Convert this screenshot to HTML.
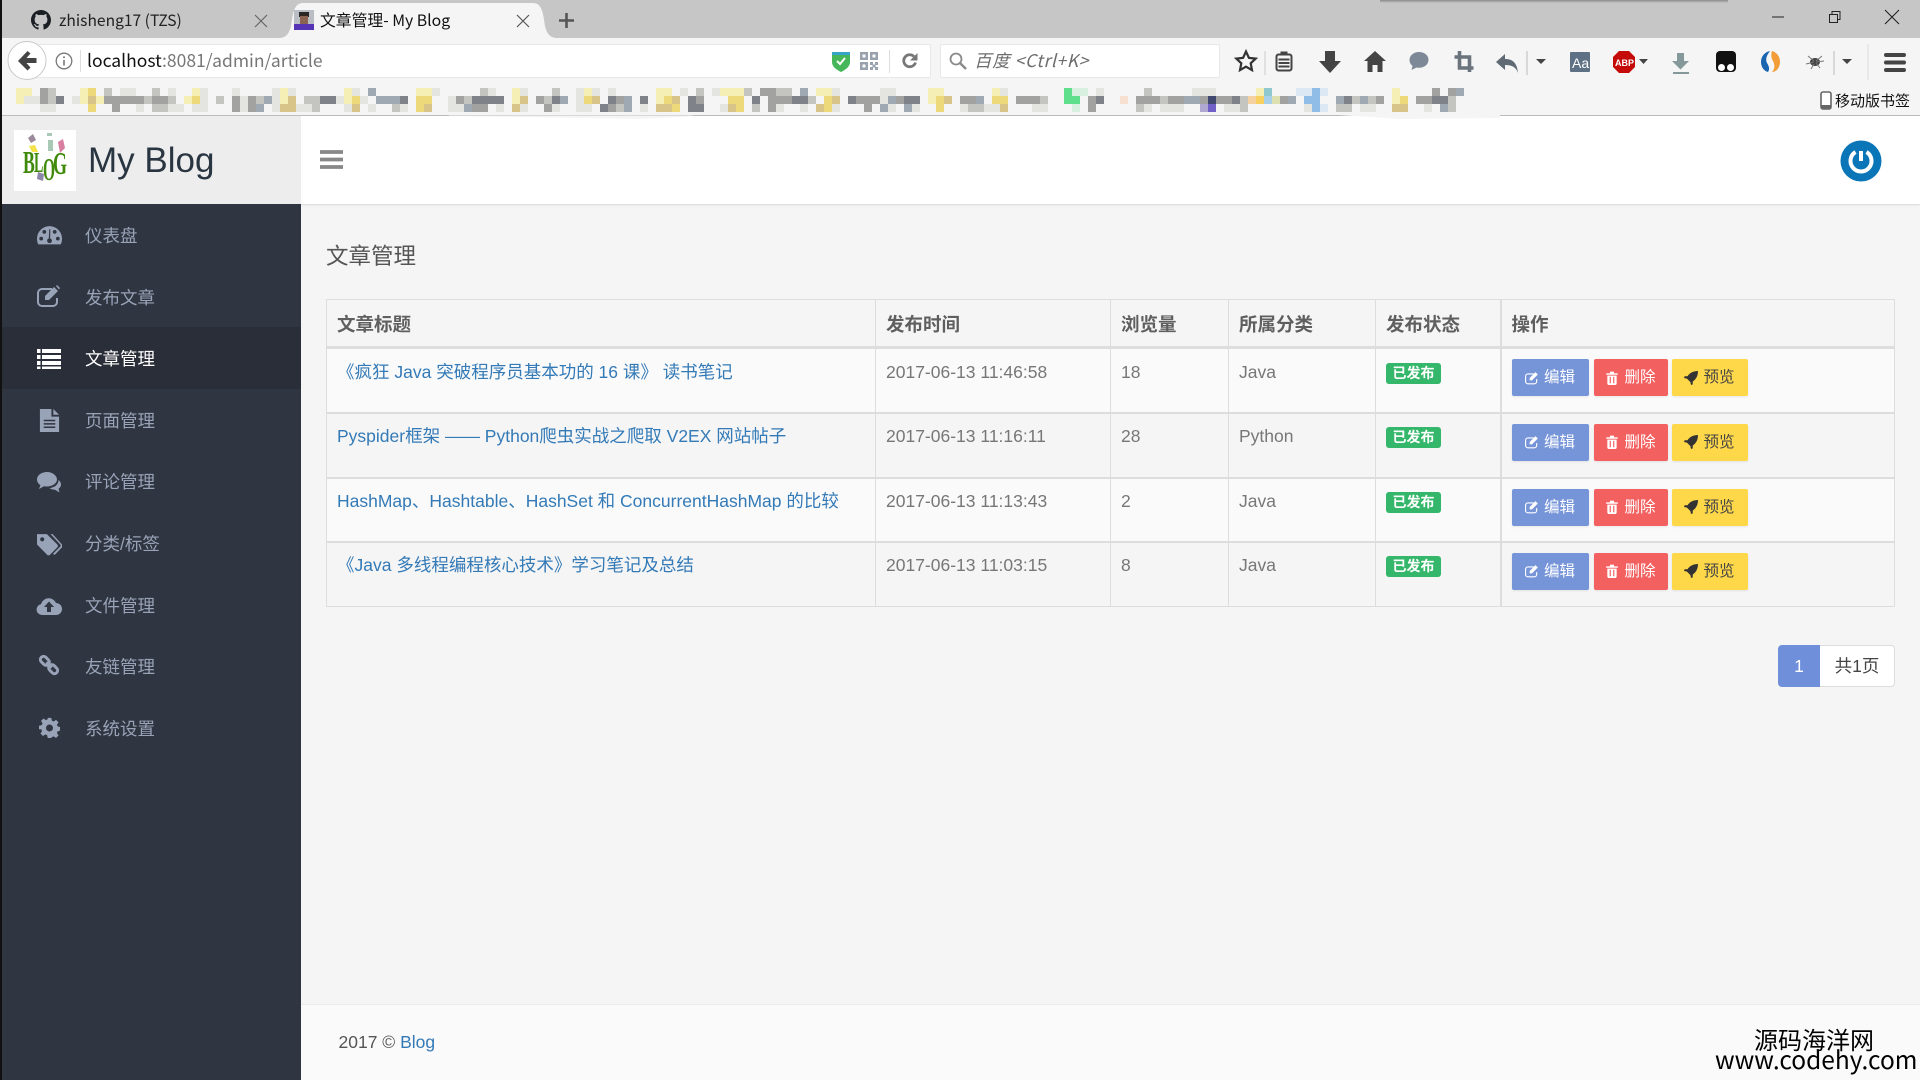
<!DOCTYPE html>
<html lang="zh">
<head>
<meta charset="utf-8">
<title>文章管理 - My Blog</title>
<style>
*{box-sizing:border-box}
html,body{margin:0;padding:0;width:1920px;height:1080px;overflow:hidden;background:#f5f5f5}
body{position:relative;font-family:"Liberation Sans","Noto Sans CJK SC",sans-serif;font-size:17.5px;color:#777}
.abs{position:absolute;white-space:nowrap}
.ui{font-family:"Noto Sans CJK SC","Liberation Sans",sans-serif}
a{color:#337ab7;text-decoration:none}
#tabbar{position:absolute;left:0;top:0;width:1920px;height:38px;background:#c6c6c6}
#toolbar{position:absolute;left:0;top:38px;width:1920px;height:78px;background:#f5f5f5;border-bottom:1px solid #bdbdbd}
.field{position:absolute;top:44px;height:34px;background:#fff;border:1px solid #e8e8e8;border-radius:2px}
#aside{position:absolute;left:2px;top:204px;width:299px;height:876px;background:#2f3541}
#brand{position:absolute;left:2px;top:116px;width:299px;height:88px;background:#ededed}
#nav{position:absolute;left:301px;top:116px;width:1619px;height:88px;background:#fff;box-shadow:0 1px 2px rgba(0,0,0,.12)}
.mi{position:absolute;left:0;width:299px;height:62px;line-height:64px;padding-left:83px;color:#98a3b7;font-size:17.5px}
.mi.on{background:#2a2e39;color:#fff}
.mi svg{position:absolute;left:34px;top:18px;width:26px;height:26px;fill:#98a3b7}
.mi.on svg{fill:#fff}
h1{position:absolute;left:326px;top:240px;margin:0;font-size:22.5px;line-height:34px;font-weight:400;color:#555}
table{position:absolute;left:326px;top:299px;width:1568px;border-collapse:collapse;table-layout:fixed}
th,td{border:1px solid #ddd;vertical-align:top;padding:0 10px;text-align:left;overflow:hidden}
th{height:48px;vertical-align:middle;font-size:18.5px;font-weight:700;color:#5f5f5f;border-bottom:3px solid #ddd;background:#f5f5f5;padding-top:1px}
td{height:65px;padding-top:10.5px;line-height:25px;font-size:17.5px;color:#777;white-space:nowrap;border-top-width:2px}
tr.odd td{background:#fafafa}
tr.even td{background:#f5f5f5}
td.op,th.op{border-left:2px solid #ddd}
.badge{display:block;width:55px;height:21px;margin-top:3px;border-radius:3px;background:#34b76a;color:#fff;font-size:14px;font-weight:700;line-height:20px;text-align:center}
.btns{display:flex;margin-top:-.5px;gap:0}
.b{display:flex;align-items:center;justify-content:center;height:37px;border-radius:2px;font-size:15.5px;line-height:37px;box-shadow:0 1px 2px rgba(0,0,0,.08)}
.b svg{width:14px;height:14px;margin-right:5px}
.b1{width:77px;background:#7694d8;color:#fff;fill:#fff;margin-right:5px}
.b2{width:74px;background:#f36060;color:#fff;fill:#fff;margin-right:4px}
.b3{width:76px;background:#ffd84a;color:#444;fill:#333}
#pg1{position:absolute;left:1778px;top:645px;width:42px;height:42px;background:#6f8fdb;color:#fff;border-radius:4px 0 0 4px;text-align:center;line-height:42px}
#pg2{position:absolute;left:1820px;top:645px;width:75px;height:42px;background:#fff;color:#444;border:1px solid #ddd;border-left:0;border-radius:0 4px 4px 0;text-align:center;line-height:40px}
#foot{position:absolute;left:301px;top:1004px;width:1619px;height:76px;background:#fafafa;border-top:1px solid #ececec;padding-left:37.5px;line-height:75px;color:#555;font-size:17.5px}
#edge{position:absolute;left:0;top:0;width:2px;height:1080px;background:#111}
</style>
</head>
<body>
<div id="tabbar"></div>
<div id="toolbar"></div>

<div class="abs" style="left:1380px;top:0;width:348px;height:3px;background:linear-gradient(#8a8a8a,#c6c6c6)"></div>

<!-- active tab -->
<svg class="abs" style="left:276px;top:0" width="284" height="40"><path d="M2 38c8 0 11-4 13-12c2-13 3-23 12-23h230c9 0 10 10 12 23c2 8 5 12 13 12z" fill="#f5f5f5"/></svg>

<!-- github icon -->
<svg class="abs" style="left:31px;top:10px" width="20" height="20" viewBox="0 0 16 16"><path fill="#1b1f23" d="M8 0C3.58 0 0 3.58 0 8c0 3.54 2.29 6.53 5.47 7.59.4.07.55-.17.55-.38 0-.19-.01-.82-.01-1.49-2.01.37-2.53-.49-2.69-.94-.09-.23-.48-.94-.82-1.13-.28-.15-.68-.52-.01-.53.63-.01 1.08.58 1.23.82.72 1.21 1.87.87 2.33.66.07-.52.28-.87.51-1.07-1.78-.2-3.64-.89-3.64-3.95 0-.87.31-1.59.82-2.15-.08-.2-.36-1.02.08-2.12 0 0 .67-.21 2.2.82.64-.18 1.32-.27 2-.27s1.36.09 2 .27c1.53-1.04 2.2-.82 2.2-.82.44 1.1.16 1.92.08 2.12.51.56.82 1.27.82 2.15 0 3.07-1.87 3.75-3.65 3.95.29.25.54.73.54 1.48 0 1.07-.01 1.93-.01 2.2 0 .21.15.46.55.38C13.71 14.53 16 11.53 16 8c0-4.42-3.58-8-8-8z"/></svg>
<div class="abs ui" style="left:59px;top:8px;line-height:24px;font-size:15.6px;color:#222">zhisheng17 (TZS)</div>
<svg class="abs" style="left:254px;top:14px" width="14" height="14"><path d="M1 1l12 12M13 1L1 13" stroke="#666" stroke-width="1.2"/></svg>

<!-- avatar -->
<svg class="abs" style="left:294px;top:10px" width="20" height="20"><rect width="20" height="20" fill="#b9bec4"/><rect y="14" width="20" height="6" fill="#5535b5"/><rect x="5" y="2" width="10" height="5" fill="#2a2624"/><rect x="6" y="6" width="8" height="8" fill="#8a6450"/></svg>
<div class="abs ui" style="left:320px;top:8px;line-height:24px;font-size:15.8px;color:#111">文章管理- My Blog</div>
<svg class="abs" style="left:516px;top:14px" width="14" height="14"><path d="M1 1l12 12M13 1L1 13" stroke="#555" stroke-width="1.2"/></svg>
<svg class="abs" style="left:558px;top:12px" width="17" height="17"><path d="M8.500 1v15M1 8.500h15" stroke="#555" stroke-width="2.600"/></svg>

<!-- window controls -->
<svg class="abs" style="left:1770px;top:8px" width="130" height="18">
<path d="M2 9h12" stroke="#222" stroke-width="1"/>
<path d="M59.500 6.500h8v8h-8zM62 6V3.500h8v8h-2.500" fill="none" stroke="#222" stroke-width="1"/>
<path d="M115 2l14 14M129 2l-14 14" stroke="#222" stroke-width="1.100"/>
</svg>

<!-- URL bar -->
<div class="field" style="left:26px;width:905px;border-left:0"></div>
<div class="field" style="left:940px;width:280px"></div>
<svg class="abs" style="left:7px;top:40px" width="41" height="41"><circle cx="20" cy="20.500" r="19" fill="#fff" stroke="#c9c9c9"/><path d="M20.500 11l-9.500 10 9.500 9.500 3-3-4-4.500h10v-5h-10l4-4.500z" fill="#444"/></svg>
<svg class="abs" style="left:55px;top:52px" width="18" height="18"><circle cx="9" cy="9" r="7.800" fill="none" stroke="#777" stroke-width="1.300"/><path d="M9 8v5.500" stroke="#777" stroke-width="1.600"/><circle cx="9" cy="5.300" r="1" fill="#777"/></svg>
<div class="abs" style="left:80px;top:50px;width:1px;height:22px;background:#ddd"></div>
<div class="abs ui" style="left:87px;top:46px;line-height:30px;font-size:17.5px;color:#111">localhost<span style="color:#777">:8081/admin/article</span></div>

<svg class="abs" style="left:832px;top:52px" width="18" height="20"><path d="M0 0h18v10c0 5-5 8-9 10C5 18 0 15 0 10z" fill="#45b75a"/><path d="M0 0h18v3H0z" fill="#35a5c8"/><path d="M5 9l3 3 5-6" fill="none" stroke="#fff" stroke-width="2"/></svg>
<svg class="abs" style="left:860px;top:52px" width="18" height="18"><g fill="#98a2ac"><path d="M0 0h8v8H0zM10 0h8v8h-8zM0 10h8v8H0z"/><path d="M10 10h3v3h-3zM15 10h3v3h-3zM12.500 12.500h3v3h-3zM10 15h3v3h-3zM15 15h3v3h-3z"/></g><path d="M2.500 2.500h3v3h-3zM12.500 2.500h3v3h-3zM2.500 12.500h3v3h-3z" fill="#fff"/></svg>
<div class="abs" style="left:889px;top:50px;width:1px;height:23px;background:#ddd"></div>
<svg class="abs" style="left:901px;top:52px" width="18" height="18"><path d="M14.500 10.500a6 6 0 1 1-1.500-6" fill="none" stroke="#777" stroke-width="2.800"/><path d="M16.500 1v7.500H9z" fill="#777"/></svg>
<svg class="abs" style="left:949px;top:52px" width="18" height="18"><circle cx="7" cy="7" r="5.500" fill="none" stroke="#8a8a8a" stroke-width="1.800"/><path d="M11 11l6 6" stroke="#8a8a8a" stroke-width="2.400"/></svg>
<div class="abs ui" style="left:974px;top:46px;line-height:30px;font-size:17.5px;letter-spacing:.6px;font-style:italic;color:#6d6d6d">百度 &lt;Ctrl+K&gt;</div>

<!-- toolbar icons -->
<svg class="abs" style="left:1230px;top:44px" width="690" height="36">
<path d="M16 7.500l2.900 6.300 6.800.8-5 4.700 1.300 6.800-6-3.400-6 3.400 1.300-6.800-5-4.700 6.800-.8z" fill="none" stroke="#333" stroke-width="2.200"/>
<path d="M35 7v24" stroke="#ccc"/>
<g transform="translate(45.500 7.500)"><rect x="1" y="3" width="15" height="16" rx="2" fill="none" stroke="#444" stroke-width="2"/><rect x="5" y="0" width="7" height="4" fill="#444"/><path d="M3 8h11M3 11.500h11M3 15h11" stroke="#444" stroke-width="2"/></g>
<path d="M95 7h10v10h6l-11 12-11-12h6z" fill="#444"/>
<path d="M145 7l-11 10h3.500v11h5v-7h5v7h5V17h3.500z" fill="#444"/>
<path d="M189 8c-5.500 0-9.500 3.500-9.500 8 0 2.500 1.200 4.500 3 6l-1 4 5-2.500c.8.200 1.600.300 2.500.300 5.500 0 9.500-3.500 9.500-8s-4-7.800-9.500-7.800z" fill="#7d8996"/>
<g fill="none" stroke="#6b747d" stroke-width="3.600" transform="translate(-2.500 -1)"><path d="M232 8v17h14"/><path d="M227 14h15v15"/></g>
<path d="M275 15c7 0 12 3 13 14-2-6-6-8-13-8v5l-9-8 9-8z" fill="#5f6a75"/>
<path d="M297 7v24" stroke="#bbb"/>
<path d="M306 15h10l-5 5z" fill="#444"/>
<rect x="340" y="8" width="20" height="20" rx="1" fill="#5d7084"/><text x="342" y="24" font-family="Liberation Sans" font-size="14" fill="#fff">Aa</text>
<path d="M389 7h10l6 6v10l-6 6h-10l-6-6V13z" fill="#c50a0a"/><text x="385" y="22" font-family="Liberation Sans" font-size="9" font-weight="700" fill="#fff">ABP</text>
<path d="M409 15h9l-4.500 5z" fill="#444"/>
<path d="M447 9h7v8h5l-8.500 8.500-8.500-8.500h5z" fill="#85989a"/><path d="M443 29h16" stroke="#85989a" stroke-width="2"/>
<rect x="486" y="7" width="20" height="21" rx="4" fill="#111"/><circle cx="491.500" cy="23.500" r="3.500" fill="#fff"/><circle cx="500.500" cy="23.500" r="3.500" fill="#fff"/>
<g transform="translate(-4 0)"><path d="M544 7c-5 1-9 5-9 11 0 5 3 9 7 10 2-3 1-6-1-9-2-4 0-8 3-12z" fill="#1a65b0"/><path d="M546 7c4 1 8 5 8 11 0 6-4 10-8 10 3-3 3-7 1-11-2-3-2-7-1-10z" fill="#f29d38"/></g>
<ellipse cx="585" cy="18" rx="5" ry="4" fill="#444"/><path d="M578 12l6 5M592 12l-6 5M576 20l8-2M594 17l-8 1M581 25l3-5M590 24l-4-5" stroke="#777"/>
<path d="M604 7v24" stroke="#bbb"/>
<path d="M612 15h10l-5 5z" fill="#444"/>
<path d="M638 0v38" stroke="#ddd"/>
<path d="M656 11h18M656 18.500h18M656 26h18" stroke="#444" stroke-width="4" stroke-linecap="round"/>
</svg>

<!-- blurred bookmarks -->
<svg class="abs" style="left:0;top:0" width="1920" height="120" shape-rendering="crispEdges" fill="none" stroke-width="8">
<path stroke="#f5eeb5" d="M16 92h16M80 92h8M192 92h8M280 92h8M344 92h8M416 92h16M512 92h8M584 92h8M656 92h16M720 92h24M816 92h16M928 92h16M992 92h8M1256 92h8M1392 92h8M16 100h8M80 100h8M96 100h8M184 100h8M280 100h8M344 100h8M512 100h8M656 100h8M928 100h8M1392 100h8"/>
<path stroke="#eed97a" d="M88 92h8M192 100h8M352 100h8M416 100h16M584 100h8M664 100h8M728 100h16M824 100h8M936 100h8M992 100h16M1400 100h8M88 108h8M416 108h8M672 108h8M736 108h8M824 108h8M936 108h8"/>
<path stroke="#d8c488" d="M88 100h8M288 100h8M520 100h8M592 100h8M672 100h8M832 100h8M944 100h8M280 108h16M352 108h8M424 108h8M512 108h8M656 108h16M728 108h8M816 108h8M1000 108h8M1392 108h16"/>
<path stroke="#e4e4e0" d="M120 92h16M168 92h8M200 92h8M232 92h8M272 92h8M288 92h8M352 92h8M432 92h8M488 92h8M520 92h8M576 92h8M592 92h8M608 92h8M680 92h8M712 92h8M832 92h8M880 92h16M1000 92h8M1096 92h8M1192 92h24M24 100h16M72 100h8M200 100h8M240 100h8M272 100h8M336 100h8M360 100h8M448 100h8M576 100h8M880 100h8M40 108h16M136 108h8M168 108h16M192 108h16M240 108h8M272 108h8M296 108h16M344 108h8M368 108h8M400 108h8M448 108h16M496 108h8M520 108h8M552 108h8M576 108h16M640 108h8M720 108h8M776 108h8M800 108h8M832 108h8M888 108h8M912 108h8M960 108h8M984 108h16M1032 108h16M1144 108h8M1160 108h24M1224 108h16M1304 108h8M1360 108h16M1424 108h8"/>
<path stroke="#c4c4c0" d="M48 92h8M104 92h8M152 92h8M480 92h8M552 92h8M696 92h8M744 92h8M776 92h16M1144 92h8M48 100h8M144 100h8M168 100h8M216 100h8M256 100h8M304 100h16M464 100h8M544 100h8M808 100h8M1040 100h8M1160 100h8M1240 100h8M1352 100h8M1368 100h8M1448 100h8M152 108h8M160 108h8M312 108h8M392 108h8M616 108h8M752 108h8M968 108h16M1136 108h8M1240 108h8M1336 108h16M1448 108h8"/>
<path stroke="#a2a2a0" d="M40 92h8M760 92h16M1432 92h8M1448 92h8M40 100h8M104 100h8M112 100h32M152 100h16M232 100h8M248 100h8M456 100h8M536 100h8M696 100h8M616 100h8M768 100h8M776 100h16M856 100h8M864 100h8M872 100h8M896 100h8M960 100h16M1016 100h24M1088 100h8M1136 100h24M1168 100h16M1200 100h8M1216 100h16M1280 100h8M1376 100h8M1416 100h16M112 108h8M232 108h8M248 108h8M472 108h16M544 108h8M608 108h8M768 108h8M864 108h8M1088 108h8"/>
<path stroke="#7f8288" d="M56 100h8M320 100h16M400 100h8M472 100h16M488 100h16M552 100h8M608 100h8M640 100h8M688 100h8M752 100h8M792 100h16M848 100h8M904 100h16M1096 100h8M1232 100h8M1344 100h8M1432 100h16M600 108h8M688 108h16"/>
<path stroke="#9fa9b4" d="M368 92h8M800 92h8M1456 92h8M264 100h8M376 100h24M560 100h8M624 100h8M888 100h8M976 100h8M1184 100h16M1288 100h8M1336 100h8M1360 100h8M256 108h8M464 108h8M624 108h8M880 108h8M904 108h8M1440 108h8"/>
<path stroke="#5fdf8c" d="M1064 92h8M1064 100h16"/>
<path stroke="#d8f0e0" d="M1072 92h16M1072 108h8"/>
<path stroke="#90bce8" d="M1312 92h8M1304 100h16M1312 108h8"/>
<path stroke="#dce8f4" d="M1296 92h16M1320 92h8M1320 108h8"/>
<path stroke="#404870" d="M1208 100h8"/>
<path stroke="#7060c8" d="M1208 108h8"/>
<path stroke="#b0a8d0" d="M1200 108h8"/>
<path stroke="#f5d0a0" d="M1248 100h8"/>
<path stroke="#f8d060" d="M1256 100h8"/>
<path stroke="#a8d0e8" d="M1264 100h8"/>
<path stroke="#dde0b0" d="M1272 100h8"/>
<path stroke="#90c8d0" d="M1264 92h8"/>
<path stroke="#f8e0d0" d="M1120 100h8"/>
</svg>

<!-- mobile bookmarks -->
<svg class="abs" style="left:1820px;top:91px" width="12" height="19"><rect x="1" y="1" width="10" height="17" rx="2" fill="#fff" stroke="#666" stroke-width="1.600"/><rect x="1" y="14" width="10" height="4" fill="#666"/></svg>
<div class="abs ui" style="left:1835px;top:90px;line-height:22px;font-size:15px;color:#111">移动版书签</div>

<!-- app header -->
<div id="nav"></div>
<div id="brand"></div>
<svg class="abs" style="left:449px;top:112px;z-index:2" width="1060" height="10"><path d="M0 4L190 7 235 5 245 3.500H0zM831 1H1051V6L950 7 890 3z" fill="#f5f5f5"/></svg>
<svg class="abs" style="left:14px;top:130px" width="62" height="61" viewBox="0 0 62 61">
<rect width="62" height="61" fill="#fff"/>
<g font-family="Liberation Serif" font-weight="700" fill="#3f8a0a"><text transform="translate(9 43) scale(.55 1)" font-size="32">B</text><text transform="translate(20 42) scale(.5 1)" font-size="28">L</text><text transform="translate(29 50) scale(.55 1.150)" font-size="28">O</text><text transform="translate(39 44) scale(.6 1.050)" font-size="30">G</text></g>
<path d="M14 8l5-4 3 6-5 3z" fill="#9a8a9a"/><path d="M15 16l6-1 3 7-6 0z" fill="#f4e24a"/><path d="M33 3h5v3h-5zM34 10h5v11h-5z" fill="#a7c9b5"/><path d="M44 12l5-3 2 9-5 5z" fill="#d87ea0"/><path d="M24 42l6 2-1 7-6-2z" fill="#8c86a8"/>
</svg>
<div class="abs" style="left:88px;top:141px;line-height:40px;font-size:35px;color:#2a3542">My Blog</div>
<svg class="abs" style="left:320px;top:150px" width="23" height="20"><path d="M0 2h23M0 9.500h23M0 17h23" stroke="#888" stroke-width="3.800"/></svg>
<svg class="abs" style="left:1840px;top:140px" width="42" height="42"><circle cx="21" cy="21" r="20.500" fill="#0b76b7"/><path d="M15.500 12a10.500 10.500 0 1 0 11 0" fill="none" stroke="#fff" stroke-width="4"/><path d="M21 11v10" stroke="#fff" stroke-width="4"/></svg>

<!-- sidebar -->
<div id="aside">
<div class="mi" style="top:0"><svg viewBox="0 0 24 24" style="left:34.500px;width:25px;height:25px"><path d="M12 4A12 12 0 0 0 0 16c0 2 .4 4 1.200 5.500h21.600C23.600 20 24 18 24 16A12 12 0 0 0 12 4z"/><g fill="#2f3541"><circle cx="4" cy="16" r="1.800"/><circle cx="7" cy="9.500" r="1.800"/><circle cx="17" cy="9.500" r="1.800"/><circle cx="20" cy="16" r="1.800"/><circle cx="12" cy="18" r="2.300"/><path d="M11.200 18l.6-11h1l-.3 11z"/></g></svg>仪表盘</div>
<div class="mi" style="top:61.600px"><svg viewBox="0 0 24 24" style="left:35px;top:19px;width:24px;height:24px"><path d="M15 4H5a4 4 0 0 0-4 4v9a4 4 0 0 0 4 4h11a4 4 0 0 0 4-4v-4" fill="none" stroke="#98a3b7" stroke-width="2"/><path d="M8 11l9-9 4 4-9 9H8zM19 1l1-1 3 3-1 1.500z"/></svg>发布文章</div>
<div class="mi on" style="top:123.200px"><svg viewBox="0 0 24 24" style="left:35px;top:19px;width:24px;height:24px"><path d="M0 3h3.500v4H0zM5 3h19v4H5zM0 9h3.500v4H0zM5 9h19v4H5zM0 15h3.500v4H0zM5 15h19v4H5zM0 20.500h3.500V23H0zM5 20.500h19V23H5z"/></svg>文章管理</div>
<div class="mi" style="top:184.800px"><svg viewBox="0 0 24 24" style="left:36px;top:20px;width:23px;height:23px"><path d="M2 0h12v8h8v16H2zM16 0l6 6h-6z"/><path d="M6 12h12M6 15.500h12M6 19h12" stroke="#2f3541" stroke-width="1.600"/></svg>页面管理</div>
<div class="mi" style="top:246.400px"><svg viewBox="0 0 24 24" style="left:35px;top:19px;width:24px;height:24px"><path d="M10 3C4.500 3 0 6.300 0 10.500c0 2.300 1.300 4.300 3.400 5.700L2 20l5-2.800c1 .2 2 .3 3 .3 5.500 0 10-3.300 10-7S15.500 3 10 3z"/><path d="M21.500 11c.3 4-3.500 7.500-9 8.200 1.500 1 3.500 1.500 5.500 1.500l4.500 2.800-1-3.700c1.500-1.100 2.500-2.600 2.500-4.300 0-1.800-1-3.400-2.500-4.500z"/></svg>评论管理</div>
<div class="mi" style="top:308px"><svg viewBox="0 0 24 24" style="left:34.500px;top:20px;width:25px;height:25px"><path d="M0 2h9.500l10 10c.8.800.8 2 0 2.800l-7 7c-.8.800-2 .8-2.800 0L0 12z"/><path d="M13 2h2l9 10c.8.800.8 2 0 2.800l-7 7.200-1.700-1 7-7c.6-.6.600-1.400 0-2z"/><circle cx="5" cy="7" r="2" fill="#2f3541"/></svg>分类/标签</div>
<div class="mi" style="top:369.600px"><svg viewBox="0 0 26 24" style="left:34px;top:19px"><path d="M6 21a5.500 5.500 0 0 1-1-10.900A8 8 0 0 1 20 9a6 6 0 0 1 0 12z"/><path d="M13 7.500l5 5.500h-3v5h-4v-5H8z" fill="#2f3541"/></svg>文件管理</div>
<div class="mi" style="top:431.200px"><svg viewBox="0 0 24 24" style="left:36px;top:19px;width:22px;height:22px"><g fill="none" stroke="#98a3b7" stroke-width="3.200"><rect x="2" y="4" width="11" height="7" rx="3.500" transform="rotate(45 7.500 7.500)"/><rect x="11" y="13" width="11" height="7" rx="3.500" transform="rotate(45 16.500 16.500)"/></g><path d="M9 9l6 6" stroke="#98a3b7" stroke-width="3"/></svg>友链管理</div>
<div class="mi" style="top:492.800px"><svg viewBox="0 0 24 24" style="left:37px;top:20px;width:21px;height:21px"><path fill-rule="evenodd" d="M10 1h4l.7 3.200 2 .9 2.800-1.800 2.800 2.800-1.800 2.800.9 2 3.200.7v4l-3.200.7-.9 2 1.800 2.800-2.800 2.800-2.800-1.800-2 .9L14 24h-4l-.7-3.200-2-.9-2.800 1.800-2.800-2.800 1.800-2.800-.9-2L0 14v-4l3.200-.7.9-2L2.300 4.500l2.800-2.800 2.800 1.800 2-.9zM12 8.500a4 4 0 1 0 0 8 4 4 0 0 0 0-8z"/></svg>系统设置</div>
</div>

<!-- content -->
<h1>文章管理</h1>
<table>
<colgroup><col style="width:549px"><col style="width:235px"><col style="width:118px"><col style="width:147px"><col style="width:125px"><col style="width:394px"></colgroup>
<thead><tr><th>文章标题</th><th>发布时间</th><th>浏览量</th><th>所属分类</th><th>发布状态</th><th class="op">操作</th></tr></thead>
<tbody>
<tr class="odd"><td><a href="#">《疯狂 Java 突破程序员基本功的 16 课》 读书笔记</a></td><td>2017-06-13 11:46:58</td><td>18</td><td>Java</td><td><span class="badge">已发布</span></td><td class="op"><div class="btns"><span class="b b1"><svg viewBox="0 0 24 24"><path d="M15 5H5a4 4 0 0 0-4 4v9a4 4 0 0 0 4 4h11a4 4 0 0 0 4-4v-4" fill="none" stroke="#fff" stroke-width="2"/><path d="M8 12l10-10 4 4-10 10H8z"/></svg>编辑</span><span class="b b2"><svg viewBox="0 0 24 24"><path d="M9 1h6l1 3h6v2.500H2V4h6zM4 8h16v13a3 3 0 0 1-3 3H7a3 3 0 0 1-3-3zM8 10v11h2V10zM14 10v11h2V10z" fill-rule="evenodd"/></svg>删除</span><span class="b b3"><svg viewBox="0 0 24 24"><path d="M24 0c-8 0-14 3-18 9H1l-1 3 5 1 6 6 1 5 3-1v-5c6-4 9-10 9-18z"/></svg>预览</span></div></td></tr>
<tr class="even"><td><a href="#">Pyspider框架 —— Python爬虫实战之爬取 V2EX 网站帖子</a></td><td>2017-06-13 11:16:11</td><td>28</td><td>Python</td><td><span class="badge">已发布</span></td><td class="op"><div class="btns"><span class="b b1"><svg viewBox="0 0 24 24"><path d="M15 5H5a4 4 0 0 0-4 4v9a4 4 0 0 0 4 4h11a4 4 0 0 0 4-4v-4" fill="none" stroke="#fff" stroke-width="2"/><path d="M8 12l10-10 4 4-10 10H8z"/></svg>编辑</span><span class="b b2"><svg viewBox="0 0 24 24"><path d="M9 1h6l1 3h6v2.500H2V4h6zM4 8h16v13a3 3 0 0 1-3 3H7a3 3 0 0 1-3-3zM8 10v11h2V10zM14 10v11h2V10z" fill-rule="evenodd"/></svg>删除</span><span class="b b3"><svg viewBox="0 0 24 24"><path d="M24 0c-8 0-14 3-18 9H1l-1 3 5 1 6 6 1 5 3-1v-5c6-4 9-10 9-18z"/></svg>预览</span></div></td></tr>
<tr class="odd"><td style="height:64px"><a href="#">HashMap、Hashtable、HashSet 和 ConcurrentHashMap 的比较</a></td><td style="height:64px">2017-06-13 11:13:43</td><td style="height:64px">2</td><td style="height:64px">Java</td><td style="height:64px"><span class="badge">已发布</span></td><td class="op" style="height:64px"><div class="btns"><span class="b b1"><svg viewBox="0 0 24 24"><path d="M15 5H5a4 4 0 0 0-4 4v9a4 4 0 0 0 4 4h11a4 4 0 0 0 4-4v-4" fill="none" stroke="#fff" stroke-width="2"/><path d="M8 12l10-10 4 4-10 10H8z"/></svg>编辑</span><span class="b b2"><svg viewBox="0 0 24 24"><path d="M9 1h6l1 3h6v2.500H2V4h6zM4 8h16v13a3 3 0 0 1-3 3H7a3 3 0 0 1-3-3zM8 10v11h2V10zM14 10v11h2V10z" fill-rule="evenodd"/></svg>删除</span><span class="b b3"><svg viewBox="0 0 24 24"><path d="M24 0c-8 0-14 3-18 9H1l-1 3 5 1 6 6 1 5 3-1v-5c6-4 9-10 9-18z"/></svg>预览</span></div></td></tr>
<tr class="even"><td><a href="#">《Java 多线程编程核心技术》学习笔记及总结</a></td><td>2017-06-13 11:03:15</td><td>8</td><td>Java</td><td><span class="badge">已发布</span></td><td class="op"><div class="btns"><span class="b b1"><svg viewBox="0 0 24 24"><path d="M15 5H5a4 4 0 0 0-4 4v9a4 4 0 0 0 4 4h11a4 4 0 0 0 4-4v-4" fill="none" stroke="#fff" stroke-width="2"/><path d="M8 12l10-10 4 4-10 10H8z"/></svg>编辑</span><span class="b b2"><svg viewBox="0 0 24 24"><path d="M9 1h6l1 3h6v2.500H2V4h6zM4 8h16v13a3 3 0 0 1-3 3H7a3 3 0 0 1-3-3zM8 10v11h2V10zM14 10v11h2V10z" fill-rule="evenodd"/></svg>删除</span><span class="b b3"><svg viewBox="0 0 24 24"><path d="M24 0c-8 0-14 3-18 9H1l-1 3 5 1 6 6 1 5 3-1v-5c6-4 9-10 9-18z"/></svg>预览</span></div></td></tr>
</tbody>
</table>

<div id="pg1">1</div>
<div id="pg2">共1页</div>

<div id="foot">2017 © <a href="#">Blog</a></div>
<div class="abs ui" style="left:1754px;top:1021px;line-height:36px;font-size:24px;color:#000">源码海洋网</div>
<div class="abs ui" style="left:1715px;top:1042px;line-height:36px;font-size:24.5px;color:#000">www.codehy.com</div>

<div id="edge"></div>
</body>
</html>
